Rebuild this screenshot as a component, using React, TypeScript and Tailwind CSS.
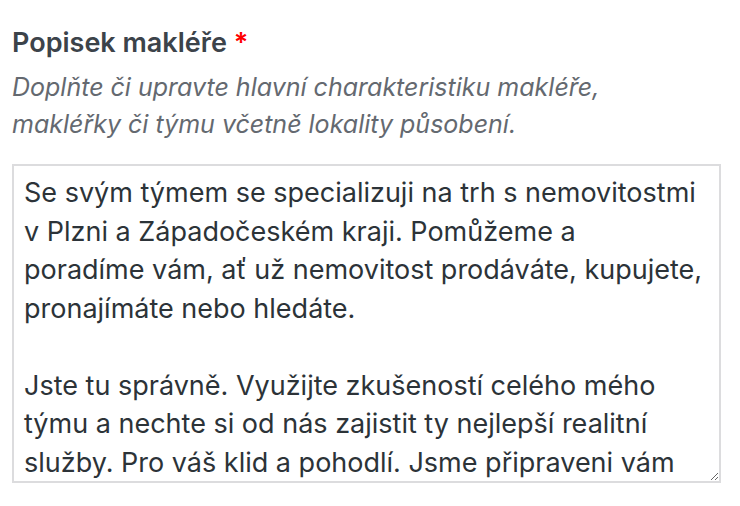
import { useState } from 'react';

const initialText =
  'Se svým týmem se specializuji na trh s nemovitostmi v Plzni a Západočeském kraji. Pomůžeme a poradíme vám, ať už nemovitost prodáváte, kupujete, pronajímáte nebo hledáte.\n\n' +
  'Jste tu správně. Využijte zkušeností celého mého týmu a nechte si od nás zajistit ty nejlepší realitní služby. Pro váš klid a pohodlí. Jsme připraveni vám pomoci s čímkoliv, co se týká nemovitostí.';

export default function App() {
  const [text, setText] = useState(initialText);

  return (
    <div className="min-h-screen bg-white px-3 pt-[24px] font-['Inter',sans-serif]">
      <label htmlFor="popisek" className="block text-[27px] font-semibold leading-[38px] text-[#3c434a]">
        Popisek makléře <span className="text-[#ff0000]">*</span>
      </label>
      <p className="mt-[7px] text-[25px] italic leading-[37px] text-[#646970]">
        Doplňte či upravte hlavní charakteristiku makléře,
        <br />
        makléřky či týmu včetně lokality působení.
      </p>
      <textarea
        id="popisek"
        value={text}
        onChange={(e) => setText(e.target.value)}
        className="mt-[21px] block h-[319px] w-[709px] resize border-2 border-[#dcdcde] pl-[10px] pr-[16px] pt-[8px] text-[27px] leading-[38.5px] text-[#2c3338] outline-none [scrollbar-width:none]"
      />
    </div>
  );
}
